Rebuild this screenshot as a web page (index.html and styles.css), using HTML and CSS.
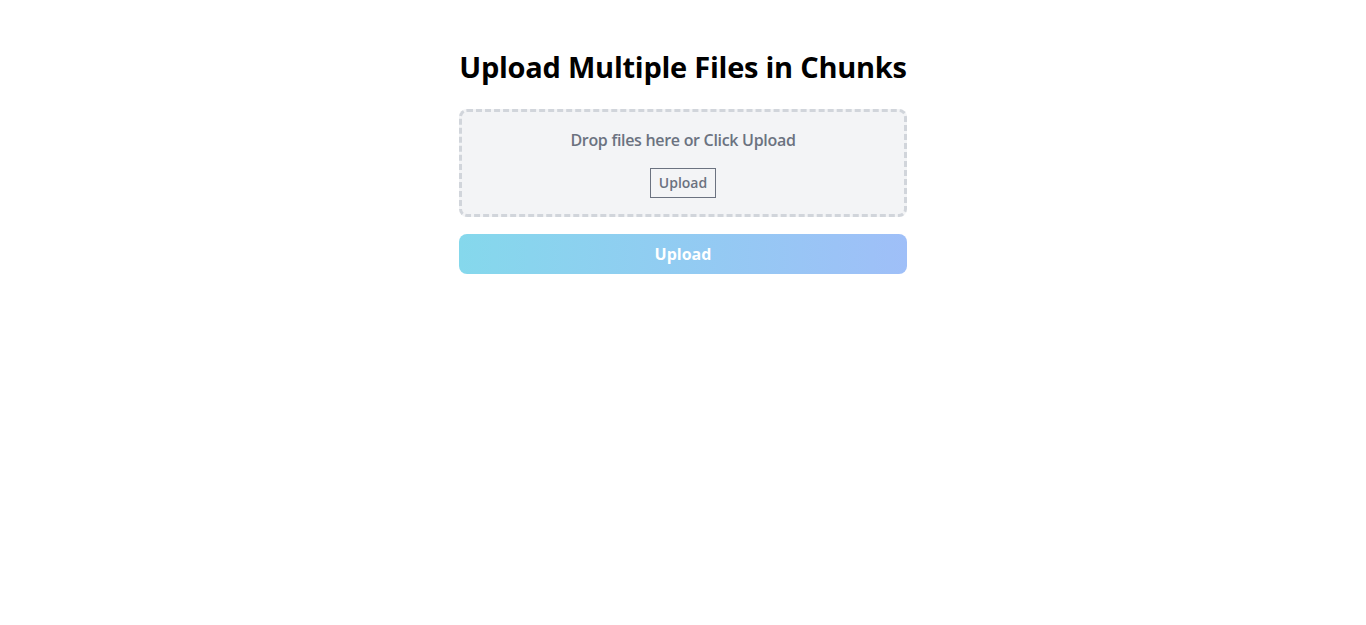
FILE: index.html
```html
<!DOCTYPE html>
<html lang="en">
<head>
<meta charset="utf-8">
<title>Upload Multiple Files in Chunks</title>
<link rel="stylesheet" href="styles.css">
</head>
<body>
<main class="container">
  <h1 class="title">Upload Multiple Files in Chunks</h1>
  <div class="dropzone">
    <p class="drop-text">Drop files here or Click Upload</p>
    <button class="pick-btn" type="button">Upload</button>
  </div>
  <button class="submit-btn" type="button">Upload</button>
</main>
</body>
</html>
```
FILE: styles.css
```css
* { box-sizing: border-box; }
html, body { margin: 0; padding: 0; background: #ffffff; }
body {
  font-family: "Open Sans", "Noto Sans", Arial, sans-serif;
  color: #000;
}
.container {
  width: 448px;
  margin: 0 auto;
  padding-top: 49px;
  display: flex;
  flex-direction: column;
}
.title {
  margin: 0 0 24px;
  font-size: 29px;
  line-height: 36px;
  font-weight: 700;
  text-align: center;
  letter-spacing: -0.25px;
  white-space: nowrap;
}
.dropzone {
  border: 3px dashed #d1d5db;
  border-radius: 8px;
  background: #f3f4f6;
  padding: 16px;
  display: flex;
  flex-direction: column;
  align-items: center;
}
.drop-text {
  margin: 0 0 16px;
  font-size: 16px;
  line-height: 24px;
  font-weight: 600;
  color: #6b7280;
  letter-spacing: -0.3px;
}
.pick-btn {
  font-family: inherit;
  font-size: 14px;
  line-height: 20px;
  font-weight: 600;
  color: #6b7280;
  background: transparent;
  border: 1px solid #6b7280;
  padding: 4px 8px;
  border-radius: 0;
}
.submit-btn {
  margin-top: 17px;
  height: 40px;
  border: none;
  border-radius: 8px;
  background: linear-gradient(to right, #85d8ec, #9fbff8);
  color: #ffffff;
  font-family: inherit;
  font-size: 16px;
  line-height: 24px;
  font-weight: 700;
}
```
